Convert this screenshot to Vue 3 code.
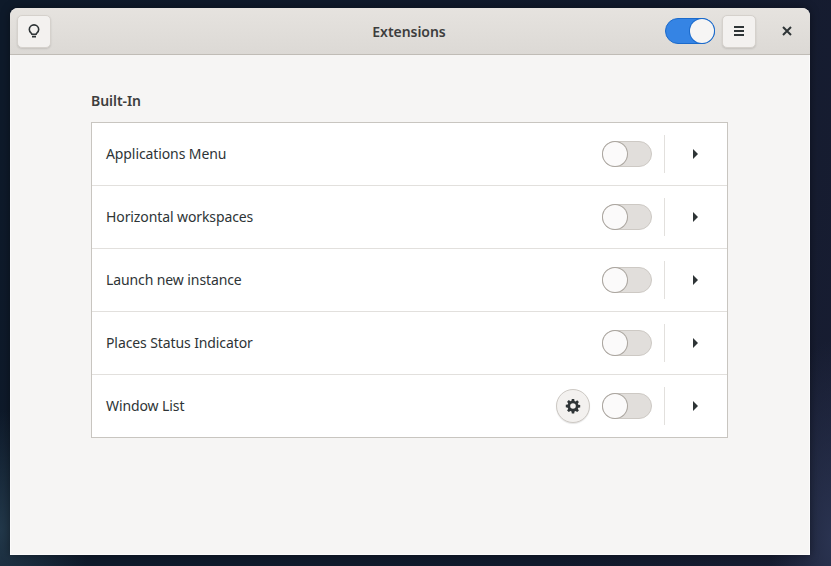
<script setup>
const extensions = [
  { name: 'Applications Menu' },
  { name: 'Horizontal workspaces' },
  { name: 'Launch new instance' },
  { name: 'Places Status Indicator' },
  { name: 'Window List', hasSettings: true },
]
</script>

<template>
  <div class="desktop">
    <div class="window">
      <header class="headerbar">
        <button class="btn">
          <svg width="16" height="16" viewBox="0 0 16 16" fill="none" stroke="#2e3436">
            <path d="M5.2 10.2C4 9.2 3.3 8 3.3 6.6a4.7 4.7 0 0 1 9.4 0c0 1.4-.7 2.6-1.9 3.6-.4.3-.6.6-.7 1H5.9c-.1-.4-.3-.7-.7-1z" stroke-width="1.6" />
            <path d="M6 13.6h4" stroke-width="1.8" />
          </svg>
        </button>
        <div class="title">Extensions</div>
        <div class="global-switch"><span class="knob"></span></div>
        <button class="btn">
          <svg width="16" height="16" viewBox="0 0 16 16" fill="#2e3436">
            <rect x="3" y="3" width="10" height="2" />
            <rect x="3" y="7" width="10" height="2" />
            <rect x="3" y="11" width="10" height="2" />
          </svg>
        </button>
        <div class="close">
          <svg width="16" height="16" viewBox="0 0 16 16" fill="none" stroke="#2e3436" stroke-width="2">
            <path d="M4 4l8 8M12 4l-8 8" />
          </svg>
        </div>
      </header>

      <main class="content">
        <h2 class="section-title">Built-In</h2>
        <div class="list">
          <div v-for="ext in extensions" :key="ext.name" class="row">
            <span class="name">{{ ext.name }}</span>
            <button v-if="ext.hasSettings" class="settings">
              <svg width="16" height="16" viewBox="0 0 16 16">
                <path fill="#2e3436" fill-rule="evenodd" d="M6.8 1h2.4l.3 1.9 1.1.5 1.6-1.1 1.7 1.7-1.1 1.6.5 1.1 1.9.3v2.4l-1.9.3-.5 1.1 1.1 1.6-1.7 1.7-1.6-1.1-1.1.5-.3 1.9H6.8l-.3-1.9-1.1-.5-1.6 1.1-1.7-1.7 1.1-1.6-.5-1.1L.8 9.2V6.8l1.9-.3.5-1.1-1.1-1.6 1.7-1.7 1.6 1.1 1.1-.5zM8 5.2a2.8 2.8 0 1 0 0 5.6 2.8 2.8 0 0 0 0-5.6z" />
              </svg>
            </button>
            <div class="switch"><span class="knob"></span></div>
            <span class="sep"></span>
            <span class="arrow"></span>
          </div>
        </div>
      </main>
    </div>
  </div>
</template>

<style>
html,
body {
  margin: 0;
  overflow: hidden;
}
</style>

<style scoped>
.desktop {
  width: 831px;
  height: 566px;
  padding: 8px 21px 11px 10px;
  box-sizing: border-box;
  background:
    radial-gradient(ellipse 90px 120px at 0 530px, #22384a 0%, rgba(34, 56, 74, 0) 100%),
    radial-gradient(ellipse 60px 200px at 831px 540px, #2a3350 0%, rgba(42, 51, 80, 0) 100%),
    linear-gradient(100deg, #0e1a2a 0%, #111a2c 70%, #181d32 100%);
  font-family: "Noto Sans", sans-serif;
}

.window {
  width: 800px;
  height: 547px;
  display: flex;
  flex-direction: column;
  border-radius: 8px 8px 0 0;
  overflow: hidden;
  background: #f6f5f4;
  box-shadow: 0 0 10px rgba(0, 0, 0, 0.4);
}

.headerbar {
  height: 46px;
  flex: none;
  display: flex;
  align-items: center;
  padding: 0 6px 0 7px;
  background: linear-gradient(#e6e3df, #dcd9d5);
  border-bottom: 1px solid #c0bcb6;
}

.btn {
  width: 34px;
  height: 33px;
  padding: 0;
  display: flex;
  align-items: center;
  justify-content: center;
  background: #f3f1ef;
  border: 1px solid #d5d1cc;
  border-radius: 5px;
  box-shadow: 0 1px 2px rgba(0, 0, 0, 0.12);
}

.title {
  flex: 1;
  text-align: center;
  padding-left: 102px;
  font-size: 14px;
  font-weight: 600;
  color: #3d3d3d;
  letter-spacing: -0.05px;
}

.global-switch {
  width: 50px;
  height: 26px;
  box-sizing: border-box;
  margin-right: 7px;
  display: flex;
  justify-content: flex-end;
  border: 1px solid #1b6acb;
  border-radius: 13px;
  background: #3584e4;
}

.global-switch .knob {
  width: 24px;
  height: 24px;
  border-radius: 50%;
  background: #f6f5f4;
  box-shadow: 0 0 0 1px #1b6acb;
}

.close {
  width: 34px;
  height: 33px;
  margin-left: 14px;
  display: flex;
  align-items: center;
  justify-content: center;
}

.content {
  flex: 1;
  padding: 36px 82px 0 81px;
  box-shadow: inset 1px 0 0 #fcfbfb, inset -1px 0 0 #fcfbfb, inset 0 -1px 0 #fcfbfb;
}

.section-title {
  margin: 0 0 12px;
  font-size: 14px;
  line-height: 19px;
  font-weight: 600;
  color: #3d3d3d;
  letter-spacing: -0.05px;
}

.list {
  background: #fff;
  border: 1px solid #c8c5c0;
}

.row {
  height: 62px;
  display: flex;
  align-items: center;
  padding-left: 14px;
  border-top: 1px solid #e2e0dd;
}

.row:first-child {
  border-top: none;
}

.name {
  flex: 1;
  padding-bottom: 2px;
  font-size: 14px;
  color: #2e3436;
  letter-spacing: -0.1px;
}

.settings {
  width: 34px;
  height: 34px;
  padding: 0;
  margin-right: 12px;
  display: flex;
  align-items: center;
  justify-content: center;
  background: #f3f1ef;
  border: 1px solid #cdc9c4;
  border-radius: 50%;
  box-shadow: 0 1px 1px rgba(0, 0, 0, 0.1);
}

.switch {
  width: 50px;
  height: 26px;
  box-sizing: border-box;
  display: flex;
  border: 1px solid #cdc9c4;
  border-radius: 13px;
  background: #e1dedb;
}

.switch .knob {
  width: 24px;
  height: 24px;
  border-radius: 50%;
  background: #fbfafa;
  box-shadow: 0 0 0 1px #aaa59f;
}

.sep {
  width: 1px;
  height: 38px;
  margin: 0 28px 0 12px;
  background: #e2e0dd;
}

.arrow {
  width: 0;
  height: 0;
  margin-right: 29px;
  border-left: 5px solid #2e3436;
  border-top: 5px solid transparent;
  border-bottom: 5px solid transparent;
}
</style>
